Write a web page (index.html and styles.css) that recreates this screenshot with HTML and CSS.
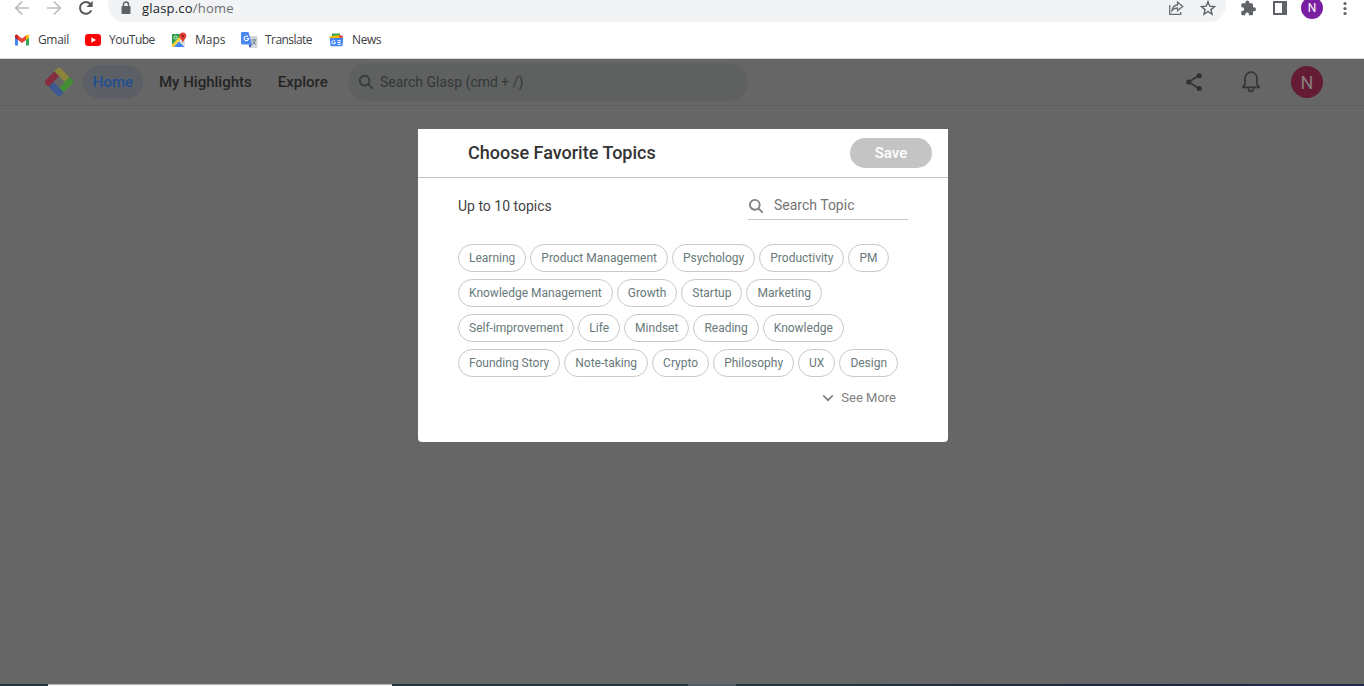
FILE: index.html
```html
<!DOCTYPE html>
<html lang="en">
<head>
<meta charset="utf-8">
<title>Glasp</title>
<link rel="stylesheet" href="styles.css">
</head>
<body>
<div class="window">
  <header class="chrome">
    <div class="toolbar">
      <div class="nav-icons">
        <svg width="16" height="16" viewBox="0 0 16 16" fill="none" stroke="#babcbe" stroke-width="1.7"><path d="M15 8H2M8.2 1.5L1.7 8l6.5 6.5"/></svg>
        <svg width="16" height="16" viewBox="0 0 16 16" fill="none" stroke="#babcbe" stroke-width="1.7"><path d="M1 8h13M7.8 1.5L14.300 8l-6.500 6.500"/></svg>
        <svg width="16" height="16" viewBox="0 0 16 16"><path d="M13.300 10.300A5.900 5.900 0 1 1 12.300 4" fill="none" stroke="#55585c" stroke-width="2"/><path d="M14.700 .8v6.300H8.400z" fill="#55585c"/></svg>
      </div>
      <div class="address">
        <svg class="lock" width="10" height="14" viewBox="0 0 10 14"><path d="M2.500 6V3.600a2.500 2.500 0 0 1 5 0V6" fill="none" stroke="#5f6368" stroke-width="1.500"/><rect x="0.500" y="5" width="9" height="8" rx="1" fill="#5f6368"/></svg>
        <span class="url">glasp.co<span class="path">/home</span></span>
        <svg class="share-page" width="16" height="16" viewBox="0 0 16 16" fill="none" stroke="#6a6d71" stroke-width="1.300"><path d="M1.700 5v9.300h11V12"/><path d="M4 10.700C4.500 7 6.300 5.200 9.500 5V2.200L14.800 6.500 9.500 10.600V8C7 8 5.500 8.800 4 10.700z"/></svg>
        <svg width="16" height="16" viewBox="0 0 16 16" fill="none" stroke="#5f6368" stroke-width="1.400"><path d="M8 1.700l1.800 4.500 4.800.3-3.700 3.100 1.200 4.700L8 11.700l-4.100 2.600 1.200-4.700L1.400 6.500l4.800-.3z"/></svg>
      </div>
      <svg class="puzzle" width="16" height="16" viewBox="0 0 24 24" fill="#5f6368"><path d="M21 11h-1.500V7a2 2 0 0 0-2-2H14V3.500a2.900 2.900 0 0 0-5.800 0V5H4a2 2 0 0 0-2 2v4h1.500a2.700 2.700 0 0 1 0 5.400H2V21a2 2 0 0 0 2 2h4v-1.500a2.700 2.700 0 0 1 5.400 0V23h4.100a2 2 0 0 0 2-2v-4H21a3 3 0 0 0 0-6z"/></svg>
      <svg class="panel" width="14" height="14" viewBox="0 0 14 14"><path d="M0 0h14v14H0zM2 2v10h7V2z" fill="#5f6368" fill-rule="evenodd"/></svg>
      <div class="profile">N</div>
      <svg class="dots" width="4" height="16" viewBox="0 0 4 16" fill="#5f6368"><circle cx="2" cy="3.500" r="1.600"/><circle cx="2" cy="8.500" r="1.600"/><circle cx="2" cy="13.500" r="1.600"/></svg>
    </div>
    <nav class="bookmarks">
      <a class="bm gmail"><svg width="14" height="12" viewBox="0 0 14 12"><path d="M0 2v8.500c0 .5.400 1 1 1h2V5z" fill="#4285f4"/><path d="M14 2v8.500c0 .5-.4 1-1 1h-2V5z" fill="#34a853"/><path d="M11 1.500V6l3-2.300V2c0-1.500-1.500-2-2.500-1z" fill="#fbbc04"/><path d="M0 2v1.700l3 2.300V1.500L2.500 1C1.500 0 0 .8 0 2z" fill="#c5221f"/><path d="M3 1.500l4 3 4-3V6L7 9 3 6z" fill="#ea4335"/></svg><span>Gmail</span></a>
      <a class="bm youtube"><svg width="16" height="12" viewBox="0 0 16 12"><rect width="16" height="12" rx="3" fill="#f00"/><path d="M6.300 3.300v5.400L11 6z" fill="#fff"/></svg><span>YouTube</span></a>
      <a class="bm maps"><svg width="16" height="16" viewBox="0 0 16 16"><rect x="1" y="2" width="13" height="13" rx="1" fill="#dce0e3"/><path d="M1 2h10.500L1 13z" fill="#2da04d"/><path d="M2.500 15L8 9.500l5.500 5.500z" fill="#4285f4"/><path d="M1 12.800L8.800 4.600l1.600 2L2.800 15H1z" fill="#fdd33c"/><circle cx="4.500" cy="5.500" r="1.500" fill="none" stroke="#d7eedc"/><path d="M11.800 .5a3.500 3.500 0 0 1 3.500 3.500c0 2.500-2.500 3-3.500 7-1-4-3.500-4.500-3.500-7A3.500 3.500 0 0 1 11.800 .5z" fill="#e04035"/><circle cx="11.800" cy="4" r="1.200" fill="#8c1d18"/></svg><span>Maps</span></a>
      <a class="bm translate"><svg width="17" height="16" viewBox="0 0 17 16"><path d="M6 4h9.500c.5 0 1 .5 1 1v10c0 .5-.5 1-1 1H9z" fill="#d6d9dc"/><path d="M10.500 8h5M13 6.700V8m-2 4.500c2-1 3-2.500 3.300-4.300M11.500 9c.7 1.500 2 2.700 3.500 3.500" fill="none" stroke="#607d8b" stroke-width=".9"/><path d="M7.500 12.500H11L8.800 16z" fill="#3850b8"/><path d="M1.500 0h6L11 12.500H1.500c-.8 0-1.500-.5-1.500-1.300V1.300C0 .5.700 0 1.500 0z" fill="#4a87ee"/><path d="M7 4.800a2.300 2.300 0 1 0 .6 1.700H5.500" fill="none" stroke="#fff" stroke-width="1.100"/></svg><span>Translate</span></a>
      <a class="bm news"><svg width="15" height="14" viewBox="0 0 15 14"><path d="M3 .5h8v4H3z" fill="#36a852"/><path d="M9 2l5 .8-1 3.500H9z" fill="#e94335"/><path d="M.5 3.500L9.500 2l2 4.500H1z" fill="#fbbc04"/><path d="M1.500 5h12c.5 0 .8.300.7.700L13.500 12.500c0 .5-.4.800-1 .8h-10c-.5 0-1-.3-1-.8L.8 5.700c0-.5.200-.7.700-.7z" fill="#4285f4"/><path d="M6 8a1.800 1.800 0 1 0 .5 1.400H5M8.500 7.700H12M8.500 9.500h3M8.500 11.300H12" fill="none" stroke="#fff"/></svg><span>News</span></a>
    </nav>
  </header>

  <main class="page">
    <div class="site-header">
      <svg class="logo" width="30" height="30" viewBox="0 0 30 30"><g transform="rotate(45 15 15)"><path d="M7 4.300h12v6.500H4.300V7A2.700 2.700 0 0 1 7 4.300z" fill="#8c8438"/><path d="M19 4.300h4A2.700 2.700 0 0 1 25.700 7v12H19z" fill="#438d36"/><path d="M11 19h14.700v4a2.700 2.700 0 0 1-2.700 2.700H11z" fill="#3c5791"/><path d="M4.300 10.800H11v14.900H7A2.700 2.700 0 0 1 4.300 23z" fill="#852e40"/></g></svg>
      <nav class="site-nav">
        <a class="link active">Home</a>
        <a class="link highlights">My Highlights</a>
        <a class="link">Explore</a>
      </nav>
      <div class="site-search">
        <svg width="16" height="16" viewBox="0 0 16 16" fill="none" stroke="#393c3b" stroke-width="1.900"><circle cx="6.600" cy="6.600" r="4.900"/><path d="M10.100 10.100l4.600 4.600"/></svg>
        <span>Search Glasp (cmd + /)</span>
      </div>
      <div class="actions">
        <svg width="18" height="20" viewBox="0 0 18 20" fill="#303030"><path d="M14 3.500L3.500 10 14 16.500" fill="none" stroke="#303030" stroke-width="1.500"/><circle cx="14.200" cy="3.800" r="2.500"/><circle cx="3.700" cy="10" r="2.500"/><circle cx="14.200" cy="16.400" r="2.500"/></svg>
        <svg class="bell" width="18" height="22" viewBox="0 0 18 22" fill="none" stroke="#343434" stroke-width="1.700"><path d="M1 16.300v-.8l2-2.200V8c0-4.300 2.700-6.800 6-6.800S15 3.700 15 8v5.300l2 2.200v.8z"/><path d="M6.500 17.200c0 4.200 5 4.200 5 0"/></svg>
        <div class="avatar">N</div>
      </div>
    </div>
  </main>

  <footer class="taskbar"><div class="task-input"></div><div class="task-active"></div></footer>

  <section class="modal">
    <div class="modal-head">
      <h1>Choose Favorite Topics</h1>
      <button class="save">Save</button>
    </div>
    <div class="modal-body">
      <div class="filter">
        <span class="limit">Up to 10 topics</span>
        <div class="topic-search">
          <svg width="16" height="16" viewBox="0 0 16 16" fill="none" stroke="#808080" stroke-width="1.900"><circle cx="6.800" cy="6.800" r="4.900"/><path d="M10.300 10.300l4.400 4.400"/></svg>
          <span>Search Topic</span>
        </div>
      </div>
      <div class="topics">
        <div class="row"><span class="chip">Learning</span><span class="chip">Product Management</span><span class="chip">Psychology</span><span class="chip">Productivity</span><span class="chip">PM</span></div>
        <div class="row"><span class="chip">Knowledge Management</span><span class="chip">Growth</span><span class="chip">Startup</span><span class="chip">Marketing</span></div>
        <div class="row"><span class="chip">Self-improvement</span><span class="chip">Life</span><span class="chip">Mindset</span><span class="chip">Reading</span><span class="chip">Knowledge</span></div>
        <div class="row"><span class="chip">Founding Story</span><span class="chip">Note-taking</span><span class="chip">Crypto</span><span class="chip">Philosophy</span><span class="chip">UX</span><span class="chip">Design</span></div>
      </div>
      <div class="more">
        <svg width="12" height="8" viewBox="0 0 12 8" fill="none" stroke="#7c7c7c" stroke-width="1.700"><path d="M1.300 1.500L6 6.200l4.700-4.700"/></svg>
        <span>See More</span>
      </div>
    </div>
  </section>
</div>
</body>
</html>
```
FILE: styles.css
```css
* { box-sizing: border-box; }
body { margin: 0; font-family: Roboto, "Liberation Sans", sans-serif; }
svg { display: block; flex: none; }
.window { position: relative; display: flex; flex-direction: column; width: 1364px; height: 686px; overflow: hidden; background: #666; }

.chrome { flex: none; height: 59px; background: #fff; border-bottom: 1px solid #d5d6d8; font-family: "Open Sans", sans-serif; }
.toolbar { display: flex; align-items: flex-start; height: 22px; padding-left: 14px; }
.nav-icons { display: flex; gap: 16px; width: 94px; }
.address { display: flex; width: 1118px; height: 22px; padding: 0 10px 0 13px; background: #f1f3f4; border-radius: 0 0 16px 16px / 0 0 18px 18px; }
.lock { margin-top: 1px; }
.url { margin-left: 11px; flex: 1; font-size: 13px; line-height: 17px; letter-spacing: 0.2px; color: #202124; }
.path { color: #6b6e72; }
.share-page { margin-right: 16px; }
.puzzle { margin-left: 14px; }
.panel { margin: 1px 0 0 17px; }
.profile { width: 22px; height: 22px; margin: -3px 0 0 14px; border-radius: 50%; background: #7b1fa2; color: #fff; font: 12px/22px Roboto, sans-serif; text-align: center; }
.dots { margin-left: 20px; }
.bookmarks { display: flex; height: 36px; padding-left: 15px; }
.bm { display: flex; align-items: center; font-size: 12px; line-height: 16px; color: #3c4043; letter-spacing: -0.35px; }
.bm svg { margin-right: 8px; }
.gmail { width: 70px; }
.gmail svg { margin-right: 9px; }
.youtube { width: 86px; letter-spacing: -0.5px; }
.maps { width: 70px; letter-spacing: 0; }
.translate { width: 88px; letter-spacing: -0.55px; }
.translate svg { margin-right: 7px; }
.news { letter-spacing: -0.4px; }

.page { flex: 1; }
.site-header { display: flex; align-items: center; height: 47px; padding: 0 41px 0 44px; border-bottom: 1px solid #5e5e5e; }
.site-nav { display: flex; align-items: center; flex: none; margin-left: 9px; width: 265px; }
.link { flex: none; font-size: 15px; font-weight: 500; line-height: 34px; color: #242424; padding-right: 26px; }
.active { width: 60px; padding: 0; margin-right: 16px; border-radius: 17px; background: #5c6066; color: #224e92; text-align: center; }
.site-search { display: flex; align-items: center; gap: 6px; width: 400px; height: 38px; padding-left: 10px; border-radius: 19px; background: #5e6160; color: #353837; font-size: 14px; }
.actions { display: flex; align-items: center; margin-left: auto; }
.bell { margin: 0 31px 0 39px; }
.avatar { width: 32px; height: 32px; border-radius: 50%; background: #631c34; color: #877b7f; font-size: 18px; line-height: 33px; text-align: center; }

.taskbar { display: flex; flex: none; height: 2px; background: linear-gradient(90deg, #22343f, #21353f 60%, #1b2440 85%, #222a4b); }
.task-input { width: 344px; margin-left: 48px; background: #f5f3f2; border-top: 1px solid #bbb; }
.task-active { width: 48px; margin-left: 296px; background: #505c64; }

.modal { position: absolute; left: 418px; top: 129px; width: 530px; height: 313px; background: #fff; border-radius: 0 0 4px 4px; }
.modal-head { display: flex; align-items: center; justify-content: space-between; height: 49px; padding: 0 16px 0 50px; border-bottom: 1px solid #c5c5c5; }
h1 { margin: 0; font-size: 18px; font-weight: 500; line-height: 24px; color: #333; }
.save { width: 82px; height: 30px; padding: 0; border: 0; border-radius: 15px; background: #c4c4c4; color: #fff; font: 500 15px/30px Roboto, sans-serif; }
.modal-body { padding: 14px 40px 0; }
.filter { display: flex; justify-content: space-between; height: 28px; }
.limit { font-size: 14px; line-height: 28px; color: #444; }
.topic-search { display: flex; align-items: center; gap: 10px; width: 160px; height: 28px; border-bottom: 1px solid #c8c8c8; color: #757575; font-size: 14px; }
.topic-search span { padding-bottom: 2px; }
.topics { display: flex; flex-direction: column; gap: 7px; margin-top: 24px; }
.row { display: flex; gap: 4px; }
.chip { height: 28px; padding: 0 10px; border: 1px solid #c9c9c9; border-radius: 14px; font-size: 12px; line-height: 26px; color: #68797a; white-space: nowrap; }
.more { display: flex; align-items: center; justify-content: flex-end; gap: 7px; height: 20px; margin-top: 11px; padding-right: 12px; color: #808080; font-size: 13px; }
.more span { padding-bottom: 1px; }
```
